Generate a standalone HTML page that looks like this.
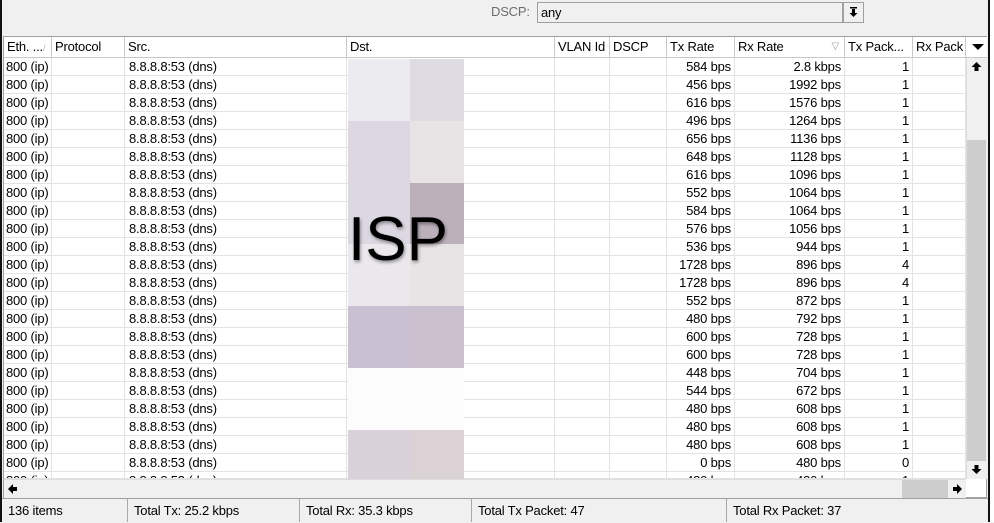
<!DOCTYPE html>
<html><head><style>
*{margin:0;padding:0;box-sizing:border-box}
body{width:994px;height:522px;background:#f0f0f0;font-family:"Liberation Sans",sans-serif;font-size:13px;letter-spacing:-0.2px;color:#000;position:relative;overflow:hidden}
.a{position:absolute}
.hd{position:absolute;top:37px;height:21px;border-right:1px solid #c8c8c8;background:#fff;line-height:20px;padding-left:3px;white-space:nowrap;overflow:hidden}
.row{position:absolute;left:4px;width:962px;height:18px;border-bottom:1px solid #e3e3e3;background:#fff}
.c{position:absolute;top:0;height:18px;line-height:17px;white-space:nowrap;border-right:1px solid #e3e3e3}
.r{text-align:right;padding-right:3px}
.blk{position:absolute}
.st{position:absolute;top:499px;height:23px;line-height:24px;padding-left:6px;border-right:1px solid #a8a8a8}
</style></head><body>
<div class="a" style="left:0;top:0;width:2px;height:522px;background:#111"></div>
<div class="a" style="left:988px;top:0;width:2px;height:522px;background:#111"></div>
<div class="a" style="left:990px;top:0;width:4px;height:522px;background:#fff"></div>
<div class="a" style="left:491px;top:4px;color:#6d6d6d">DSCP:</div>
<div class="a" style="left:537px;top:2px;width:306px;height:21px;border:1px solid #a0a0a0;background:#f0f0f0;padding-left:3px;line-height:19px">any</div>
<div class="a" style="left:843px;top:2px;width:21px;height:21px;border:1px solid #a0a0a0;background:#f0f0f0"><svg width="19" height="19"><rect x="6" y="4" width="7" height="1.5" fill="#000"/><path d="M8 6h3v4h2.5l-4 4-4-4H8z" fill="#000"/></svg></div>
<div class="a" style="left:3px;top:36px;width:984px;height:462px;border:1px solid #a0a0a0;background:#fff"></div>
<div class="hd" style="left:4px;width:48px">Eth. ...<span style="color:#bbb;font-size:9px">/</span></div>
<div class="hd" style="left:52px;width:73px">Protocol</div>
<div class="hd" style="left:125px;width:222px">Src.</div>
<div class="hd" style="left:347px;width:208px">Dst.</div>
<div class="hd" style="left:555px;width:55px">VLAN Id</div>
<div class="hd" style="left:610px;width:57px">DSCP</div>
<div class="hd" style="left:667px;width:68px">Tx Rate</div>
<div class="hd" style="left:735px;width:110px">Rx Rate<span style="position:absolute;right:5px;top:0;color:#999;font-size:10px">&#x25BD;</span></div>
<div class="hd" style="left:845px;width:68px">Tx Pack...</div>
<div class="hd" style="left:913px;width:53px">Rx Pack</div>
<div class="hd" style="left:966px;width:21px;border-right:none"><svg width="18" height="20"><path d="M3 7h12l-6 6z" fill="#000"/></svg></div>
<div class="a" style="left:4px;top:57px;width:983px;height:1px;background:#c8c8c8"></div>
<div id="rows"></div>
<div class="blk" style="left:348px;top:59px;width:62px;height:62px;background:#ecebef"></div>
<div class="blk" style="left:410px;top:59px;width:54px;height:62px;background:#dedbe2"></div>
<div class="blk" style="left:348px;top:121px;width:62px;height:62px;background:#dcd7e0"></div>
<div class="blk" style="left:410px;top:121px;width:54px;height:62px;background:#e8e3e4"></div>
<div class="blk" style="left:348px;top:183px;width:62px;height:61px;background:#dcd8e2"></div>
<div class="blk" style="left:410px;top:183px;width:54px;height:61px;background:#bcb0bb"></div>
<div class="blk" style="left:348px;top:244px;width:62px;height:62px;background:#ebe8ed"></div>
<div class="blk" style="left:410px;top:244px;width:54px;height:62px;background:#e8e3e4"></div>
<div class="blk" style="left:348px;top:306px;width:62px;height:62px;background:#c9c0d1"></div>
<div class="blk" style="left:410px;top:306px;width:54px;height:62px;background:#cbc1ce"></div>
<div class="blk" style="left:348px;top:368px;width:116px;height:62px;background:#fcfcfc"></div>
<div class="blk" style="left:348px;top:430px;width:62px;height:50px;background:#d8d1da"></div>
<div class="blk" style="left:410px;top:430px;width:54px;height:50px;background:#dbd2d6"></div>
<div class="a" style="left:348px;top:204px;font-size:62px;line-height:72px;letter-spacing:0;color:#000;text-shadow:1px 2px 3px rgba(0,0,0,.4)">ISP</div>
<div class="a" style="left:966px;top:58px;width:21px;height:421px;background:#f0f0f0;border-left:1px solid #ddd"></div>
<div class="a" style="left:967px;top:140px;width:19px;height:321px;background:#cdcdcd"></div>
<div class="a" style="left:967px;top:58px;width:19px;height:18px"><svg width="19" height="18"><path d="M9.5 4l5 5h-3v4h-4v-4h-3z" fill="#000"/></svg></div>
<div class="a" style="left:967px;top:461px;width:19px;height:17px;background:#f0f0f0"><svg width="19" height="17"><path d="M9.5 13l5-5h-3v-4h-4v4h-3z" fill="#000"/></svg></div>
<div class="a" style="left:4px;top:479px;width:962px;height:19px;background:#f0f0f0;border-top:1px solid #ddd"></div>
<div class="a" style="left:902px;top:480px;width:46px;height:18px;background:#cdcdcd"></div>
<div class="a" style="left:4px;top:480px;width:18px;height:18px"><svg width="18" height="18"><path d="M4 9l5-5v3h4v4h-4v3z" fill="#000"/></svg></div>
<div class="a" style="left:948px;top:480px;width:18px;height:18px"><svg width="18" height="18"><path d="M14 9l-5-5v3h-4v4h4v3z" fill="#000"/></svg></div>
<div class="a" style="left:2px;top:498px;width:986px;height:1px;background:#a0a0a0"></div>
<div class="st" style="left:2px;width:126px">136 items</div>
<div class="st" style="left:128px;width:172px">Total Tx: 25.2 kbps</div>
<div class="st" style="left:300px;width:172px">Total Rx: 35.3 kbps</div>
<div class="st" style="left:472px;width:255px">Total Tx Packet: 47</div>
<div class="st" style="left:727px;width:260px;border-right:none">Total Rx Packet: 37</div>
<script>
var d=[["584 bps","2.8 kbps",1],["456 bps","1992 bps",1],["616 bps","1576 bps",1],["496 bps","1264 bps",1],["656 bps","1136 bps",1],["648 bps","1128 bps",1],["616 bps","1096 bps",1],["552 bps","1064 bps",1],["584 bps","1064 bps",1],["576 bps","1056 bps",1],["536 bps","944 bps",1],["1728 bps","896 bps",4],["1728 bps","896 bps",4],["552 bps","872 bps",1],["480 bps","792 bps",1],["600 bps","728 bps",1],["600 bps","728 bps",1],["448 bps","704 bps",1],["544 bps","672 bps",1],["480 bps","608 bps",1],["480 bps","608 bps",1],["480 bps","608 bps",1],["0 bps","480 bps",0],["480 bps","480 bps",1]];
var h="";
for(var i=0;i<d.length;i++){var t=58+i*18;var hh=i==23?7:18;
h+='<div class="row" style="top:'+t+'px;height:'+hh+'px;overflow:hidden">'+
'<div class="c" style="left:0;width:48px;padding-left:2px">800 (ip)</div>'+
'<div class="c" style="left:48px;width:73px"></div>'+
'<div class="c" style="left:121px;width:222px;padding-left:4px">8.8.8.8:53 (dns)</div>'+
'<div class="c" style="left:343px;width:208px"></div>'+
'<div class="c" style="left:551px;width:55px"></div>'+
'<div class="c" style="left:606px;width:57px"></div>'+
'<div class="c r" style="left:663px;width:68px">'+d[i][0]+'</div>'+
'<div class="c r" style="left:731px;width:110px">'+d[i][1]+'</div>'+
'<div class="c r" style="left:841px;width:68px">'+d[i][2]+'</div>'+
'<div class="c" style="left:909px;width:53px"></div></div>';}
document.getElementById("rows").innerHTML=h;
</script>
</body></html>
